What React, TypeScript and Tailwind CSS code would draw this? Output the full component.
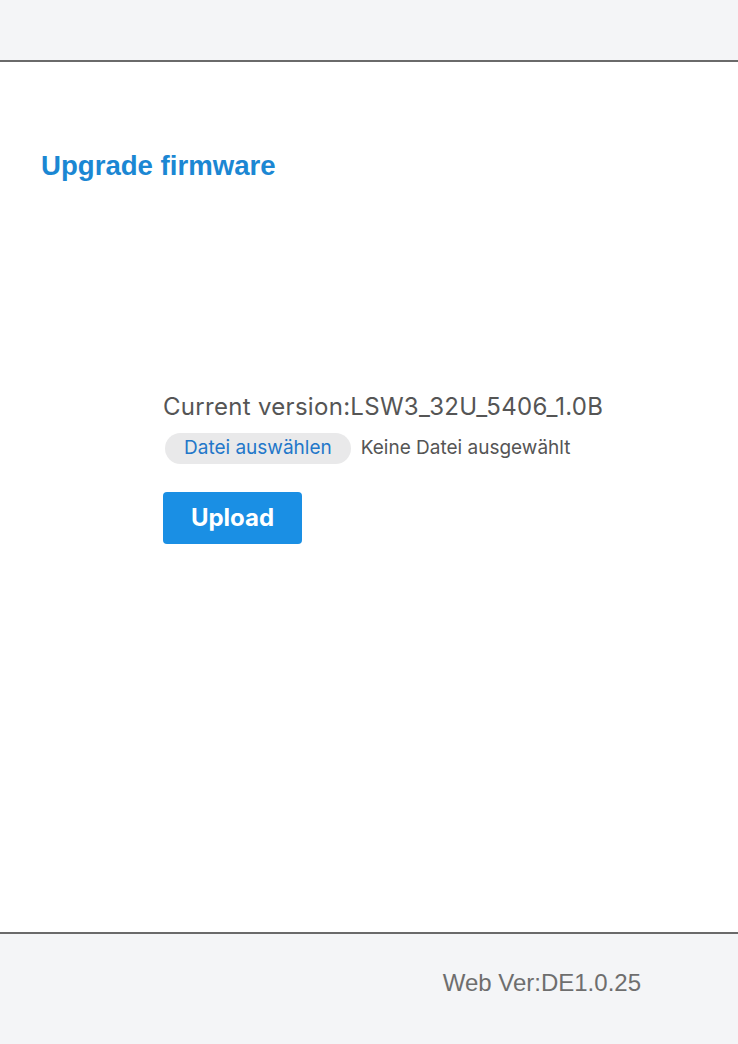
import React from "react";

export default function App() {
  return (
    <div className="flex h-[1044px] w-[738px] flex-col bg-white">
      <header className="h-[62px] shrink-0 border-b-2 border-[#6a6a6a] bg-[#f4f5f7]" />
      <main className="flex flex-1 flex-col bg-white px-[41px] pt-[88px]">
        <h1 className="font-['Liberation_Sans',Arial,sans-serif] text-[27.6px] font-bold leading-[32px] text-[#1b87d3]">
          Upgrade firmware
        </h1>
        <div className="ml-[122px] mt-[211px] flex flex-col font-['Inter','Noto_Sans',sans-serif]">
          <div className="text-[24px] leading-[28px] tracking-[0.3px] text-[#555555]">
            Current version:LSW3_32U_5406_1.0B
          </div>
          <div className="mt-[12px] flex items-center">
            <span className="ml-[2px] flex h-[31px] items-center rounded-full bg-[#e9e9ea] px-[19px] text-[19px] text-[#2277c9]">
              Datei auswählen
            </span>
            <span className="ml-[10px] text-[19px] text-[#555555]">Keine Datei ausgewählt</span>
          </div>
          <button className="mt-[28px] flex h-[52px] w-[139px] items-center justify-center rounded-[4px] bg-[#1a8fe4] text-[24px] font-bold text-white">
            Upload
          </button>
        </div>
      </main>
      <footer className="flex h-[112px] shrink-0 items-start justify-end border-t-2 border-[#6a6a6a] bg-[#f4f5f7] pr-[97px] pt-[35px]">
        <span className="font-['Liberation_Sans',Arial,sans-serif] text-[24px] leading-[28px] text-[#6e6e6e]">
          Web Ver:DE1.0.25
        </span>
      </footer>
    </div>
  );
}
